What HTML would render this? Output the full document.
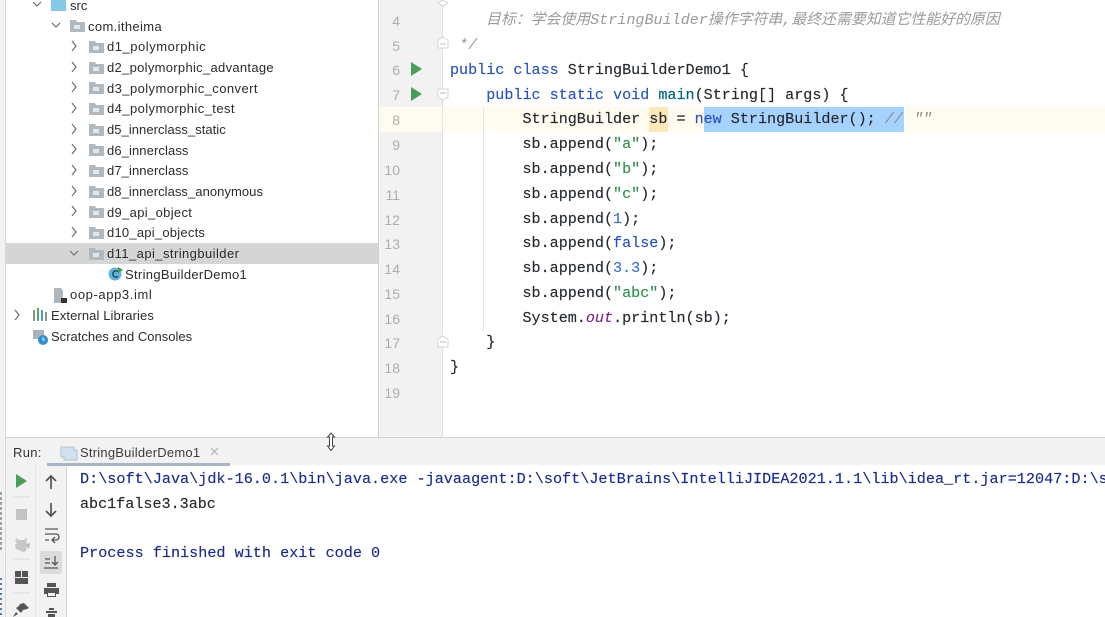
<!DOCTYPE html>
<html><head><meta charset="utf-8">
<style>
html,body{margin:0;padding:0;background:#fff}
#r{position:relative;width:1105px;height:617px;overflow:hidden;background:#fff;filter:blur(.3px)}
#r div,#r span.a,#r svg{position:absolute}
.t{font:13px/20px "Liberation Sans","Noto Sans CJK SC",sans-serif;color:#2b2b2b;white-space:nowrap;margin-top:.5px}
.c{font:15.1px/24px "Liberation Mono",monospace;color:#24292e;white-space:pre;left:450px;-webkit-text-stroke:.15px}
.n{font:14px/24px "Liberation Sans",sans-serif;color:#aeaeae;left:382px;width:18px;text-align:right;margin-top:1px}
.k{color:#2a52b8}.s{color:#2f8f4f}.m{color:#3f72d2}.o{color:#80248e;font-style:italic}
.cm{color:#9a9a9a;font-style:italic;-webkit-text-stroke:0}
.z{font-size:14.88px}
.p{font-size:15.17px;color:#1c2b8c}
</style></head><body><div id="r">
<!-- sidebars -->
<div style="left:0;top:0;width:5px;height:617px;background:#f2f2f2;border-right:1px solid #d8d8d8"></div>
<div style="left:378px;top:0;width:65px;height:437px;background:#f2f2f2;border-left:1px solid #cfcfcf;border-right:1px solid #e0e0e0;box-sizing:border-box"></div>
<div style="left:379px;top:107px;width:726px;height:25px;background:#fefbf0"></div>
<div style="left:442px;top:107px;width:1px;height:25px;background:#e6e4da"></div>
<div style="left:6px;top:243px;width:372px;height:21px;background:#d5d5d5"></div>
<!-- tree -->
<svg style="left:0;top:0" width="378" height="345" fill="none" stroke="#6e6e6e" stroke-width="1.2">
<path d="M33 2l4 4 4-4M52 23l4 4 4-4M70 251l4 4 4-4"/>
<path d="M72 41l4 5-4 5M72 62l4 5-4 5M72 82l4 5-4 5M72 103l4 5-4 5M72 124l4 5-4 5M72 144l4 5-4 5M72 165l4 5-4 5M72 186l4 5-4 5M72 206l4 5-4 5M72 227l4 5-4 5M15 310l4 5-4 5"/>
<g stroke="none">
<path fill="#85c8e8" d="M51 0h15v11H51z"/>
<path fill="#b0b8c0" d="M70 20h6l1 2h8v10H70z"/>
<g fill="#b0b8c0">
<path d="M89 41h6l1 2h8v10H89z"/><path d="M89 62h6l1 2h8v10H89z"/><path d="M89 82h6l1 2h8v10H89z"/><path d="M89 103h6l1 2h8v10H89z"/><path d="M89 124h6l1 2h8v10H89z"/><path d="M89 144h6l1 2h8v10H89z"/><path d="M89 165h6l1 2h8v10H89z"/><path d="M89 186h6l1 2h8v10H89z"/><path d="M89 206h6l1 2h8v10H89z"/><path d="M89 227h6l1 2h8v10H89z"/><path d="M89 248h6l1 2h8v10H89z"/>
</g>
<g fill="#e4e7ea"><rect x="93" y="46" width="6" height="4"/><rect x="93" y="67" width="6" height="4"/><rect x="93" y="87" width="6" height="4"/><rect x="93" y="108" width="6" height="4"/><rect x="93" y="129" width="6" height="4"/><rect x="93" y="149" width="6" height="4"/><rect x="93" y="170" width="6" height="4"/><rect x="93" y="191" width="6" height="4"/><rect x="93" y="211" width="6" height="4"/><rect x="93" y="232" width="6" height="4"/><rect x="93" y="253" width="6" height="4"/><rect x="74" y="25" width="6" height="4"/></g>
<circle cx="115" cy="274" r="6.500" fill="#5fb4dc"/>
<path d="M118 271.500a3.200 3.200 0 100 5" fill="none" stroke="#12323f" stroke-width="1.200"/>
<path fill="#3c9c4a" d="M118 267l5 3-5 3z"/>
<path fill="#aeb6bd" d="M54 288h7l2 3v7h-2v5h-7z"/><rect x="61" y="298" width="6" height="5" fill="#333"/>
<rect x="33" y="310" width="2" height="11" fill="#8a949c"/><rect x="37" y="308" width="2" height="13" fill="#59a869"/><rect x="41" y="310" width="2" height="11" fill="#4a9cd6"/><rect x="45" y="312" width="2" height="9" fill="#8a949c"/>
<path fill="#aab3ba" d="M33 330h11v9H33z"/><circle cx="43" cy="340" r="5" fill="#2f8fd0"/><path d="M43 337v3h2" stroke="#fff" stroke-width="1"/>
</g></svg>
<div class="t" style="left:70px;top:-5px">src</div>
<div class="t" style="left:88px;top:16px;letter-spacing:.36px">com.itheima</div>
<div class="t" style="left:107px;top:36px;letter-spacing:.53px">d1_polymorphic</div>
<div class="t" style="left:107px;top:57px;letter-spacing:.3px">d2_polymorphic_advantage</div>
<div class="t" style="left:107px;top:78px;letter-spacing:.42px">d3_polymorphic_convert</div>
<div class="t" style="left:107px;top:98px;letter-spacing:.42px">d4_polymorphic_test</div>
<div class="t" style="left:107px;top:119px;letter-spacing:.05px">d5_innerclass_static</div>
<div class="t" style="left:107px;top:140px;letter-spacing:.1px">d6_innerclass</div>
<div class="t" style="left:107px;top:160px;letter-spacing:.1px">d7_innerclass</div>
<div class="t" style="left:107px;top:181px;letter-spacing:.06px">d8_innerclass_anonymous</div>
<div class="t" style="left:107px;top:202px;letter-spacing:.33px">d9_api_object</div>
<div class="t" style="left:107px;top:222px;letter-spacing:.23px">d10_api_objects</div>
<div class="t" style="left:107px;top:243px;letter-spacing:.43px">d11_api_stringbuilder</div>
<div class="t" style="left:125px;top:264px;letter-spacing:.32px">StringBuilderDemo1</div>
<div class="t" style="left:70px;top:284px;letter-spacing:.6px">oop-app3.iml</div>
<div class="t" style="left:51px;top:305px;letter-spacing:.1px">External Libraries</div>
<div class="t" style="left:51px;top:326px;letter-spacing:.01px">Scratches and Consoles</div>
<!-- gutter numbers -->
<div class="n" style="top:8px">4</div><div class="n" style="top:33px">5</div><div class="n" style="top:57px">6</div><div class="n" style="top:82px">7</div><div class="n" style="top:107px">8</div><div class="n" style="top:132px">9</div><div class="n" style="top:157px">10</div><div class="n" style="top:182px">11</div><div class="n" style="top:207px">12</div><div class="n" style="top:231px">13</div><div class="n" style="top:256px">14</div><div class="n" style="top:281px">15</div><div class="n" style="top:306px">16</div><div class="n" style="top:330px">17</div><div class="n" style="top:355px">18</div><div class="n" style="top:380px">19</div>
<svg style="left:378px;top:0" width="80" height="360">
<path fill="#4a9e5c" d="M33 62l11 7-11 7zM33 87l11 7-11 7z"/>
<g fill="#fff" stroke="#d4d4d4"><path d="M60 48v-8l5-3 5 3v8zM60 89v8l5 3 5-3v-8zM60 347v-8l5-3 5 3v8z"/><path d="M65 0l5 3-5 3-5-3z"/></g>
<path stroke="#bbb" d="M62 44h6M62 93h6M62 342h6"/>
</svg>
<!-- indent guide -->
<div style="left:483px;top:107px;width:1px;height:224px;background:#e4e4e4"></div>
<!-- highlights -->
<div style="left:649px;top:107px;width:19px;height:25px;background:#fce8b8"></div>
<div style="left:704px;top:107px;width:200px;height:25px;background:#a6d2ff"></div>
<!-- code -->
<div class="c cm" style="top:8px;left:486px;font-family:'Liberation Mono','Noto Sans CJK SC',monospace"><span class="z">目标：学会使用</span>StringBuilder<span class="z">操作字符串</span>,<span class="z">最终还需要知道它性能好的原因</span></div>
<div class="c cm" style="top:33px"> */</div>
<div class="c" style="top:58px"><span class="k">public class</span> StringBuilderDemo1 {</div>
<div class="c" style="top:83px">    <span class="k">public static void</span> <span style="color:#00627a">main</span>(String[] args) {</div>
<div class="c" style="top:107px">        StringBuilder sb = <span class="k">new</span> StringBuilder(); <span style="color:#8c8c8c;font-style:italic;-webkit-text-stroke:0">//</span><span style="color:#8c8c8c;font-style:italic;-webkit-text-stroke:0;margin-left:2px"> ""</span></div>
<div class="c" style="top:132px">        sb.append(<span class="s">"a"</span>);</div>
<div class="c" style="top:157px">        sb.append(<span class="s">"b"</span>);</div>
<div class="c" style="top:182px">        sb.append(<span class="s">"c"</span>);</div>
<div class="c" style="top:207px">        sb.append(<span class="m">1</span>);</div>
<div class="c" style="top:231px">        sb.append(<span class="k">false</span>);</div>
<div class="c" style="top:256px">        sb.append(<span class="m">3.3</span>);</div>
<div class="c" style="top:281px">        sb.append(<span class="s">"abc"</span>);</div>
<div class="c" style="top:306px">        System.<span class="o">out</span>.println(sb);</div>
<div class="c" style="top:330px">    }</div>
<div class="c" style="top:355px">}</div>
<!-- run panel -->
<div style="left:6px;top:437px;width:1099px;height:28px;background:#f2f2f2;border-top:1px solid #d4d4d4;box-sizing:border-box"></div>
<div style="left:6px;top:465px;width:61px;height:152px;background:#f2f2f2;border-right:1px solid #d8d8d8;box-sizing:border-box"></div>
<div style="left:47px;top:463px;width:183px;height:3px;background:#a9b4c4"></div>
<div style="left:35px;top:465px;width:1px;height:152px;background:#e2e2e2"></div>
<div class="t" style="left:13px;top:442px;color:#333;letter-spacing:.3px">Run:</div>
<div class="t" style="left:80px;top:442px;color:#3c3c3c;letter-spacing:.22px">StringBuilderDemo1</div>
<svg style="left:0;top:435px" width="240" height="182" fill="none">
<path d="M61 12h13v3h3v10H64v-3h-3z" fill="#cfe3ee" stroke="#b6c2ca"/>
<path d="M211 13l7 7M218 13l-7 7" stroke="#b5b5b5" stroke-width="1.2"/>
<path fill="#4a9e5c" d="M16 39l11 7-11 7z"/>
<rect x="16" y="74" width="11" height="11" fill="#c3c3c3"/>
<path fill="#c8c8c8" d="M17 103l2 2h5l2-2 1 2-1 2 2 2-2 2 1 3-3 1-3 1-3-1-2-1-1-4 2-2-2-2z"/><path d="M25 110l5-2-1 6zM25 114l-4 3 5-1z" fill="#bbb"/>
<path stroke="#dcdcdc" d="M12 62h18M12 124h18M12 158h18"/>
<path fill="#555" d="M15 136h6v6h-6zM22 136h6v6h-6zM15 143h13v6H15z"/>
<path fill="#555" d="M24 168l5 5-2 1-4 1-2 3-5-5 3-2 1-2zM16 177l-3 5 5-3z"/>
<path d="M51 54V41M46 46l5-5 5 5M51 68v13M46 76l5 5 5-5" stroke="#555" stroke-width="1.7" />
<path d="M45 94h13M45 99h11a3 3 0 010 6h-3M55 102l-3 3 3 3M45 105h4" stroke="#555" stroke-width="1.3"/>
<rect x="40" y="116" width="22" height="23" rx="2" fill="#dcdcdc"/>
<path d="M45 124h5M45 128h5M44 133h14M55 121v9M52 127l3 3 3-3" stroke="#555" stroke-width="1.3"/>
<path fill="#555" d="M47 148h9v4h-9zM44 153h15v6h-3v3H47v-3h-3z"/><rect x="48" y="158" width="7" height="3" fill="#f2f2f2"/>
<path fill="#555" d="M49 173h5v2h-5zM46 176h11v2H46zM48 179h7v3h-7z"/>
</svg>
<svg style="left:0;top:490px" width="5" height="127"><path stroke="#9aa0a6" stroke-width="2" stroke-dasharray="3 2" d="M1 2v60"/><path stroke="#5a78a8" stroke-width="2" stroke-dasharray="2 3" d="M1 88v39"/></svg>
<div class="c p" style="left:80px;top:467px">D:\soft\Java\jdk-16.0.1\bin\java.exe -javaagent:D:\soft\JetBrains\IntelliJIDEA2021.1.1\lib\idea_rt.jar=12047:D:\soft</div>
<div class="c" style="left:80px;top:492px">abc1false3.3abc</div>
<div class="c p" style="left:80px;top:541px">Process finished with exit code 0</div>
<!-- cursor -->
<svg style="left:325px;top:432px" width="12" height="20" fill="#fff" stroke="#444"><path d="M6 1l3.500 4H7.500v9H9.500L6 18.500 2.500 14h2V5h-2z"/></svg>
</div></body></html>
